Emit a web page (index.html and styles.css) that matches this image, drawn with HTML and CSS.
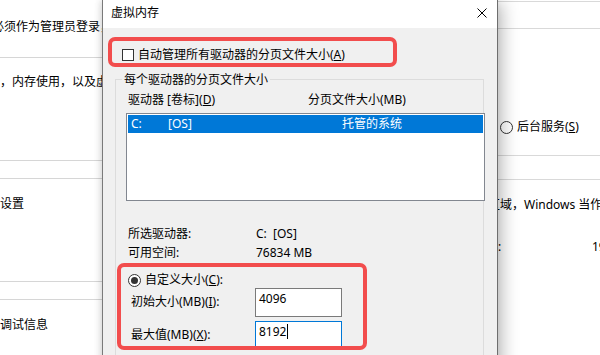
FILE: index.html
```html
<!DOCTYPE html>
<html lang="zh-CN">
<head>
    <meta charset="UTF-8">
    <meta name="viewport" content="width=device-width, initial-scale=1.0">
    <title>虚拟内存</title>
    <link rel="stylesheet" href="styles.css">
</head>
<body>
    <div class="desktop">
        <!-- 系统属性 (behind, left) -->
        <div class="win win-system">
            <p class="sys-note">必须作为管理员登录，才能进行下列大多数更改。</p>
            <div class="sys-group g1"><p>，内存使用，以及虚拟内存</p></div>
            <div class="sys-group g2"><p>设置</p></div>
            <div class="sys-group g3"><p>调试信息</p></div>
        </div>

        <!-- 性能选项 (behind, right) -->
        <div class="win win-perf">
            <div class="perf-tabs"></div>
            <div class="perf-sched">
                <div class="opt"><span class="radio"></span>后台服务(<u>S</u>)</div>
            </div>
            <div class="perf-vm">
                <p class="perf-desc">区域，Windows 当作 RAM 使用。</p>
                <div class="perf-total"><span>所有驱动器总分页文件大小:</span><span>1984 MB</span></div>
            </div>
        </div>

        <!-- 虚拟内存 dialog -->
        <div class="dialog">
            <div class="dlg-title">
                <span>虚拟内存</span>
                <svg class="close" width="10" height="10" viewBox="0 0 10 10">
                    <path d="M0.5 0.5 L9.5 9.5 M9.5 0.5 L0.5 9.5" stroke="#000" stroke-width="1" fill="none"/>
                </svg>
            </div>
            <div class="dlg-body">
                <div class="mark auto-box">
                    <span class="chk"></span>自动管理所有驱动器的分页文件大小(<u>A</u>)
                </div>

                <div class="group">
                    <div class="group-title">每个驱动器的分页文件大小</div>
                    <div class="cols">
                        <span class="c1">驱动器 [卷标](<u>D</u>)</span>
                        <span>分页文件大小(MB)</span>
                    </div>
                    <div class="listbox">
                        <div class="row-sel">
                            <span class="drv">C:</span>
                            <span class="vol">[OS]</span>
                            <span>托管的系统</span>
                        </div>
                    </div>

                    <div class="info">
                        <div class="info-row"><span>所选驱动器:</span><span>C:&nbsp;&nbsp;[OS]</span></div>
                        <div class="info-row"><span>可用空间:</span><span>76834 MB</span></div>
                    </div>

                    <div class="mark custom-box">
                        <div class="radio-row"><span class="radio on"></span>自定义大小(<u>C</u>):</div>
                        <div class="field">
                            <span class="field-label">初始大小(MB)(<u>I</u>):</span>
                            <div class="edit">4096</div>
                        </div>
                        <div class="field second">
                            <span class="field-label">最大值(MB)(<u>X</u>):</span>
                            <div class="edit focus">8192<span class="caret"></span></div>
                        </div>
                    </div>
                </div>
            </div>
        </div>
    </div>
</body>
</html>
```

FILE: styles.css
```css
*{
    margin: 0;
    padding: 0;
    box-sizing: border-box;
}
body{
    font-family: "Noto Sans", "Noto Sans CJK SC", "Microsoft YaHei", sans-serif;
    font-size: 12px;
    color: #000;
    background: #fff;
}
u{
    text-decoration: underline;
    text-underline-offset: 1px;
}
.desktop{
    position: relative;
    width: 600px;
    height: 355px;
    overflow: hidden;
    background: #fff;
}
.win{
    position: absolute;
    top: 0;
    height: 355px;
    background: #fff;
    white-space: nowrap;
    line-height: 16px;
}

/* left window */
.win-system{
    left: 0;
    width: 120px;
}
.sys-note{
    margin: 19px 0 0 -8px;
}
.sys-group{
    height: 104px;
    border-top: 1px solid #d6d6d6;
    border-bottom: 1px solid #d6d6d6;
    padding-top: 17px;
}
.g1{
    margin-top: 22px;
    padding-top: 16px;
}
.g2, .g3{
    margin-top: 17px;
}

/* right window */
.win-perf{
    left: 340px;
    width: 300px;
}
.perf-tabs{
    margin-top: 1px;
    height: 28px;
    border-top: 1px solid #d9d9d9;
    border-bottom: 1px solid #d9d9d9;
}
.perf-sched{
    height: 127px;
    padding-top: 90px;
    border-bottom: 1px solid #d9d9d9;
}
.opt{
    display: flex;
    align-items: center;
    padding-left: 160px;
}
.opt .radio{
    margin-right: 4px;
}
.perf-vm{
    margin-top: 23px;
    border-top: 1px solid #d9d9d9;
    padding-top: 17px;
}
.perf-desc{
    padding-left: 148px;
}
.perf-total{
    display: flex;
    margin-top: 26px;
    padding-left: 14px;
}
.perf-total span{
    flex-shrink: 0;
}
.perf-total span:first-child{
    width: 238px;
}

/* dialog */
.dialog{
    position: absolute;
    left: 102px;
    top: 0;
    width: 396px;
    height: 400px;
    border-left: 1px solid #7a7a7a;
    border-right: 1px solid #6e6e6e;
    background: #f0f0f0;
    box-shadow: 7px 0 16px -3px rgba(0, 0, 0, 0.28), -2px 0 6px rgba(0, 0, 0, 0.12);
}
.dlg-title{
    height: 28px;
    background: #fff;
    display: flex;
    align-items: center;
    justify-content: space-between;
    padding: 0 10px 2px 8px;
    line-height: 16px;
}
.dlg-body{
    padding-top: 9px;
    line-height: 16px;
}
.mark{
    border: 4px solid #f24d4d;
    border-radius: 7px;
}
.auto-box{
    margin-left: 5px;
    width: 289px;
    height: 30px;
    padding: 6px 0 0 10px;
    display: flex;
    align-items: center;
}
.chk{
    width: 12px;
    height: 12px;
    border: 1px solid #333;
    background: #fff;
    margin-right: 4px;
}
.radio{
    display: inline-block;
    width: 13px;
    height: 13px;
    border: 1px solid #333;
    border-radius: 50%;
    background: #fff;
    position: relative;
}
.radio.on::after{
    content: "";
    position: absolute;
    left: 2px;
    top: 2px;
    width: 7px;
    height: 7px;
    border-radius: 50%;
    background: #333;
}

.group{
    margin: 12px 0 0 12px;
    width: 369px;
    height: 320px;
    border: 1px solid #dcdcdc;
}
.group-title{
    width: fit-content;
    margin: -8px 0 0 6px;
    padding: 0 2px;
    background: #f0f0f0;
}
.cols{
    display: flex;
    margin: 4px 0 0 12px;
}
.cols .c1{
    width: 180px;
    flex-shrink: 0;
}
.listbox{
    margin: 5px 0 0 10px;
    width: 359px;
    height: 88px;
    border: 1px solid #828790;
    background: #fff;
    padding: 1px;
}
.row-sel{
    display: flex;
    height: 18px;
    line-height: 18px;
    padding-left: 3px;
    background: #0078d7;
    color: #fff;
}
.row-sel .drv{
    width: 37px;
}
.row-sel .vol{
    width: 174px;
}
.info{
    margin: 23px 0 0 12px;
}
.info-row{
    display: flex;
    line-height: 19px;
}
.info-row span:first-child{
    width: 128px;
}

.custom-box{
    margin: 1px 0 0 1px;
    width: 250px;
    height: 87px;
}
.radio-row{
    display: flex;
    align-items: center;
    height: 16px;
    margin-top: 5px;
    padding-left: 7px;
}
.radio-row .radio{
    margin-right: 4px;
}
.field{
    display: flex;
    align-items: flex-start;
    padding-left: 10px;
}
.field.second{
    margin-top: 4px;
}
.field-label{
    width: 124px;
    margin-top: 6px;
}
.edit{
    width: 87px;
    height: 29px;
    border: 1px solid #7a7a7a;
    background: #fff;
    padding: 2px 0 0 3px;
}
.edit.focus{
    height: 25px;
    border-color: #0078d7;
    border-bottom: 0;
}
.caret{
    display: inline-block;
    width: 1px;
    height: 15px;
    margin-left: 1px;
    background: #000;
    vertical-align: -3px;
}
```
